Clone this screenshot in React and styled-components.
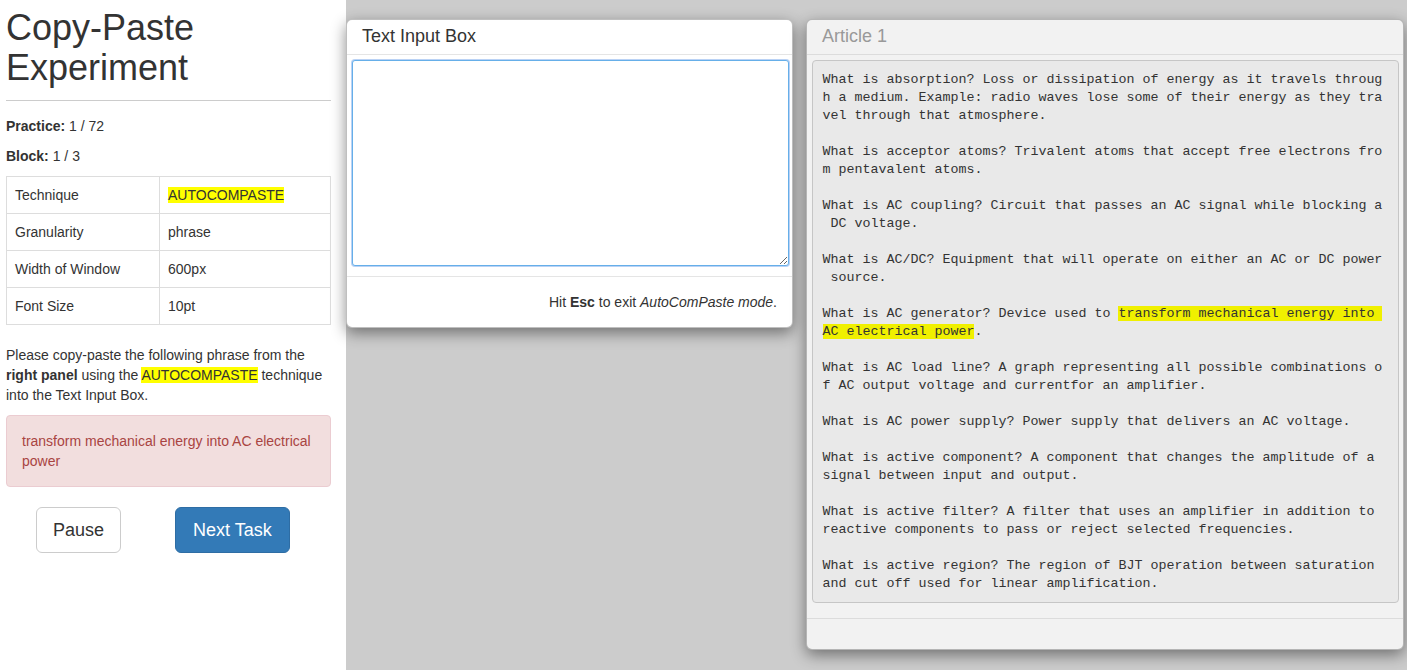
import React from "react";
import styled, { createGlobalStyle } from "styled-components";

const Global = createGlobalStyle`
  * { box-sizing: border-box; }
  html, body { margin: 0; padding: 0; }
  body {
    font-family: "Liberation Sans", Arial, Helvetica, sans-serif;
    font-size: 14px;
    line-height: 20px;
    color: #333;
    background: #ccc;
  }
`;

const Page = styled.div`
  display: flex;
  height: 670px;
  background: #cccccc;
  overflow: hidden;
`;

const Sidebar = styled.aside`
  width: 346px;
  flex-shrink: 0;
  background: #fff;
  padding: 0 15px 0 6px;
`;

const Title = styled.h1`
  font-size: 36px;
  font-weight: 500;
  line-height: 1.1;
  margin: 8px 0 0;
  color: #333;
`;

const Rule = styled.hr`
  border: 0;
  border-top: 1px solid #ccc;
  margin: 13px 0 15px;
`;

const Para = styled.p`
  margin: 0 0 10px;
`;

const Highlight = styled.span`
  background: ${(p) => p.$bg || "#ffff00"};
`;

const Table = styled.table`
  width: 100%;
  border-collapse: collapse;
  margin-bottom: 20px;
`;

const Cell = styled.td`
  border: 1px solid #ddd;
  padding: 8px;
  line-height: 20px;
  vertical-align: top;
  width: ${(p) => (p.$first ? "153px" : "auto")};
`;

const Alert = styled.div`
  background: #f2dede;
  border: 1px solid #ebccd1;
  color: #a94442;
  border-radius: 4px;
  padding: 15px;
  margin-bottom: 20px;
`;

const ButtonRow = styled.div`
  display: flex;
  gap: 54px;
  padding-left: 30px;
`;

const Button = styled.button`
  font-family: inherit;
  font-size: 18px;
  line-height: 24px;
  padding: 10px ${(p) => (p.$primary ? "17px" : "16px")};
  border-radius: 6px;
  border: 1px solid ${(p) => (p.$primary ? "#2e6da4" : "#ccc")};
  background: ${(p) => (p.$primary ? "#337ab7" : "#fff")};
  color: ${(p) => (p.$primary ? "#fff" : "#333")};
  cursor: pointer;
`;

const Main = styled.main`
  display: flex;
  align-items: flex-start;
  gap: 13px;
  padding: 19px 0 0 0;
`;

const Panel = styled.section`
  width: ${(p) => p.$width}px;
  flex-shrink: 0;
  background: ${(p) => (p.$muted ? "#f2f2f2" : "#fff")};
  border: 1px solid rgba(0, 0, 0, 0.25);
  border-radius: 6px;
  box-shadow: 0 5px 15px rgba(0, 0, 0, 0.45);
  overflow: hidden;
`;

const PanelHeader = styled.div`
  padding: 6px 15px 8px;
  border-bottom: 1px solid ${(p) => (p.$muted ? "#dcdcdc" : "#e5e5e5")};
`;

const PanelTitle = styled.h4`
  margin: 0;
  font-size: 18px;
  font-weight: 500;
  line-height: 20px;
  color: ${(p) => (p.$muted ? "#999" : "#333")};
`;

const PanelBody = styled.div`
  padding: ${(p) => (p.$pre ? "5px 4px 15px 5px" : "5px 3px 10px 5px")};
`;

const TextArea = styled.textarea`
  display: block;
  width: 100%;
  height: 206px;
  margin: 0;
  padding: 2px 3px;
  font-family: "Liberation Sans", Arial, sans-serif;
  font-size: 14px;
  border: 1px solid #66afe9;
  border-radius: 3px;
  outline: none;
  box-shadow: 0 0 0 1px rgba(102, 155, 233, 0.45);
  background: #fff;
  color: #333;
  caret-color: #333;
`;

const PanelFooter = styled.div`
  border-top: 1px solid ${(p) => (p.$muted ? "#dcdcdc" : "#e5e5e5")};
  padding: 15px;
  text-align: right;
  min-height: 31px;
`;

const Pre = styled.pre`
  margin: 0;
  padding: 9.5px;
  font-family: "Liberation Mono", "Courier New", monospace;
  font-size: 10pt;
  line-height: 18px;
  color: #333;
  background: #e9e9e9;
  border: 1px solid #c6c6c6;
  border-radius: 4px;
  white-space: pre-wrap;
  word-break: break-all;
  word-wrap: break-word;
`;

/* a space that wraps to the start of the next line, as in the reference */
const LeadSpace = styled.span`
  display: inline-block;
  white-space: pre;
`;

const rows = [
  ["Technique", <Highlight>AUTOCOMPASTE</Highlight>],
  ["Granularity", "phrase"],
  ["Width of Window", "600px"],
  ["Font Size", "10pt"],
];

const part1 = `What is absorption? Loss or dissipation of energy as it travels through a medium. Example: radio waves lose some of their energy as they travel through that atmosphere.

What is acceptor atoms? Trivalent atoms that accept free electrons from pentavalent atoms.

What is AC coupling? Circuit that passes an AC signal while blocking a`;
const part2 = `DC voltage.

What is AC/DC? Equipment that will operate on either an AC or DC power`;
const part3 = `source.

What is AC generator? Device used to `;
const marked = `transform mechanical energy into AC electrical power`;
const after = `.

What is AC load line? A graph representing all possible combinations of AC output voltage and currentfor an amplifier.

What is AC power supply? Power supply that delivers an AC voltage.

What is active component? A component that changes the amplitude of a signal between input and output.

What is active filter? A filter that uses an amplifier in addition to reactive components to pass or reject selected frequencies.

What is active region? The region of BJT operation between saturation and cut off used for linear amplification.`;

export default function App() {
  return (
    <>
      <Global />
      <Page>
        <Sidebar>
          <Title>Copy-Paste Experiment</Title>
          <Rule />
          <Para>
            <b>Practice:</b> 1 / 72
          </Para>
          <Para>
            <b>Block:</b> 1 / 3
          </Para>
          <Table>
            <tbody>
              {rows.map(([k, v]) => (
                <tr key={k}>
                  <Cell $first>{k}</Cell>
                  <Cell>{v}</Cell>
                </tr>
              ))}
            </tbody>
          </Table>
          <Para>
            Please copy-paste the following phrase from the <b>right panel</b>{" "}
            using the <Highlight>AUTOCOMPASTE</Highlight> technique into the
            Text Input Box.
          </Para>
          <Alert>transform mechanical energy into AC electrical power</Alert>
          <ButtonRow>
            <Button>Pause</Button>
            <Button $primary>Next Task</Button>
          </ButtonRow>
        </Sidebar>
        <Main>
          <Panel $width={447}>
            <PanelHeader>
              <PanelTitle>Text Input Box</PanelTitle>
            </PanelHeader>
            <PanelBody>
              <TextArea autoFocus />
            </PanelBody>
            <PanelFooter>
              Hit <b>Esc</b> to exit <i>AutoComPaste mode</i>.
            </PanelFooter>
          </Panel>
          <Panel $width={598} $muted>
            <PanelHeader $muted>
              <PanelTitle $muted>Article 1</PanelTitle>
            </PanelHeader>
            <PanelBody $pre>
              <Pre>
                {part1}
                <LeadSpace> </LeadSpace>
                {part2}
                <LeadSpace> </LeadSpace>
                {part3}
                <Highlight $bg="#f0f000">{marked}</Highlight>
                {after}
              </Pre>
            </PanelBody>
            <PanelFooter $muted />
          </Panel>
        </Main>
      </Page>
    </>
  );
}
